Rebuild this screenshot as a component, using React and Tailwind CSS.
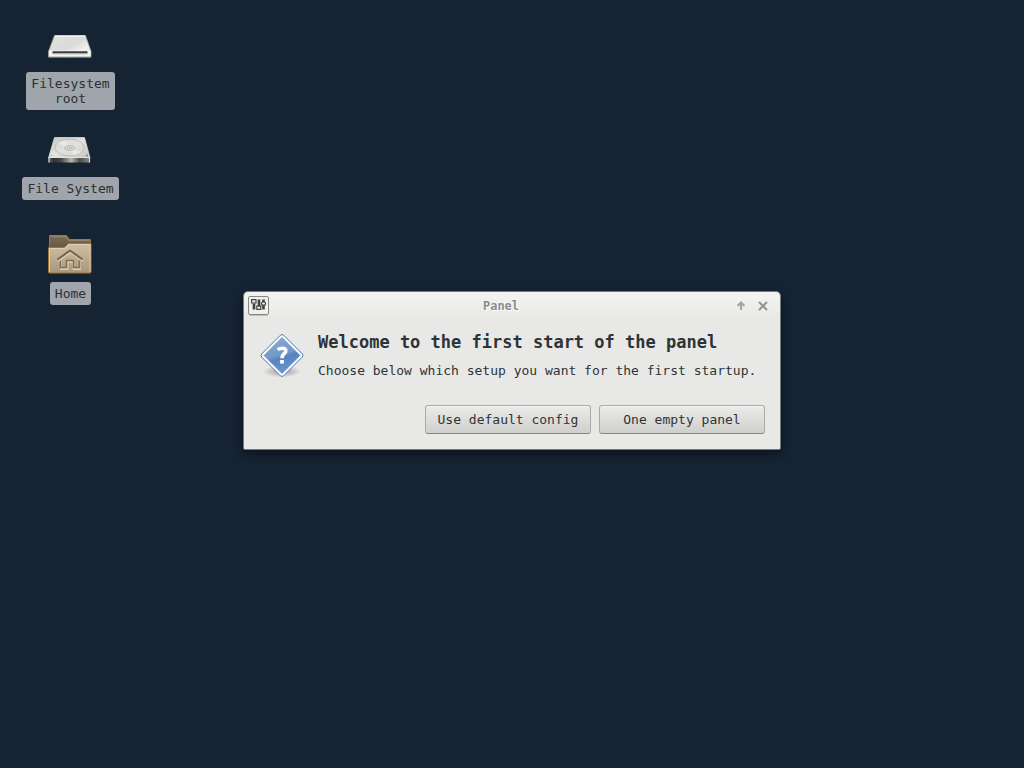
import React from "react";

function RemovableDrive() {
  return (
    <svg viewBox="1 -2 48 48" className="size-12" aria-hidden="true">
      <defs>
        <linearGradient id="rd-top" x1="0" y1="0" x2="1" y2="1">
          <stop offset="0" stopColor="#e2e2e0" />
          <stop offset="0.5" stopColor="#dadad9" />
          <stop offset="0.75" stopColor="#f1f1f0" />
          <stop offset="1" stopColor="#cfcfcd" />
        </linearGradient>
      </defs>
      <path d="M8.500 13.500h31l5.500 16v5.500H2.500v-5.500z" fill="url(#rd-top)" stroke="#a5a5a3" strokeWidth="0.8" />
      <path d="M9 14h30" stroke="#fff" />
      <path d="M3 28.500h41.500v6H3z" fill="#f3f3f2" />
      <path d="M6.500 29.300h35v2.200h-35z" fill="#3b3e3c" />
      <path d="M8 32h32" stroke="#c5c5c3" />
      <path d="M2.500 35.200h42.500" stroke="#8e8e8a" strokeWidth="0.8" />
    </svg>
  );
}

function HardDisk() {
  return (
    <svg viewBox="1 -2 48 48" className="size-12" aria-hidden="true">
      <defs>
        <linearGradient id="hd-top" x1="0" y1="0" x2="1" y2="1">
          <stop offset="0" stopColor="#c4c6c3" />
          <stop offset="0.5" stopColor="#e3e4e2" />
          <stop offset="1" stopColor="#c2c4c1" />
        </linearGradient>
        <linearGradient id="hd-front">
          <stop offset="0" stopColor="#6a6d69" />
          <stop offset="0.12" stopColor="#30332f" />
          <stop offset="0.3" stopColor="#454844" />
          <stop offset="0.55" stopColor="#b7b9b5" />
          <stop offset="0.75" stopColor="#4b4e4a" />
          <stop offset="1" stopColor="#8f918d" />
        </linearGradient>
      </defs>
      <path d="M8.500 10.500h30l5.500 20.500H2.500z" fill="url(#hd-top)" stroke="#d9dad8" strokeWidth="0.8" />
      <ellipse cx="23.500" cy="20.500" rx="14.500" ry="8.500" fill="#dddedc" fillOpacity="0.6" stroke="#b6b8b5" strokeWidth="0.8" />
      <path d="M23.500 21 11 16.500q4-3 9-3.300zM23.500 21l12.500 4q-3 3-8.500 3.700z" fill="#fff" fillOpacity="0.3" />
      <ellipse cx="23.500" cy="21" rx="5" ry="2.300" fill="#d6d7d5" stroke="#aeb0ad" strokeWidth="0.8" />
      <path d="M21 21h5" stroke="#9fa19e" strokeDasharray="1" />
      <circle cx="41" cy="28.500" r="0.900" fill="#777976" />
      <circle cx="5.500" cy="28.500" r="0.700" fill="#a4a6a3" />
      <path d="M2.500 31h41.500v4.500H2.500z" fill="url(#hd-front)" />
      <path d="M2.500 30.500H44M3 31v4.500M43.600 31v4.500" stroke="#e1e2e0" />
    </svg>
  );
}

function HomeFolder() {
  return (
    <svg viewBox="1 0 48 48" className="size-12" aria-hidden="true">
      <defs>
        <linearGradient id="hf-back" x1="0" y1="0" x2="0" y2="1">
          <stop offset="0" stopColor="#7d6d58" />
          <stop offset="1" stopColor="#665641" />
        </linearGradient>
        <linearGradient id="hf-front" x1="0" y1="0" x2="0" y2="1">
          <stop offset="0" stopColor="#cfc0a4" />
          <stop offset="1" stopColor="#a8977a" />
        </linearGradient>
      </defs>
      <path d="M3.500 18V5.500h17l3 4h21V18z" fill="url(#hf-back)" stroke="#a5752f" />
      <path d="M4.500 6.700h15.500l3 4h20.500" fill="none" stroke="#9b8a71" />
      <path d="M2.500 17.500h15q1.500 0 2.500-1.500l1-1.500q1-1 2.500-1h21.500v28.500q0 1-1 1H3.500q-1 0-1-1z" fill="url(#hf-front)" stroke="#a5752f" />
      <path d="M3.500 42V18.500h14.500q1.500 0 2.500-1.500l1-1.500q1-1 2-1h20.500V42" fill="none" stroke="#e3d6be" strokeOpacity="0.8" />
      <g fill="none" strokeLinejoin="round">
        <path d="m12 31 12.500-8.500 12.500 8.500M15 30.500v8.500h6.500v-7h6v7h6.500v-8.500" stroke="#d9cbb0" strokeWidth="2" />
        <path d="m11.500 29.500 12.500-9 12.500 9" stroke="#75644a" strokeWidth="2" />
        <path d="M14.500 30.500v7h6v-7h7v7h6v-7" stroke="#7f6e53" strokeWidth="1.500" />
      </g>
    </svg>
  );
}

function QuestionIcon() {
  return (
    <svg viewBox="0 0 48 48" className="size-12 shrink-0" role="img" aria-label="Question">
      <defs>
        <linearGradient id="q-fill" x1="0.200" y1="0" x2="0.500" y2="1">
          <stop offset="0" stopColor="#8aaad2" />
          <stop offset="0.500" stopColor="#7399ca" />
          <stop offset="0.600" stopColor="#5784be" />
          <stop offset="1" stopColor="#6796d0" />
        </linearGradient>
        <radialGradient id="q-shadow">
          <stop offset="0" stopColor="#000" stopOpacity="0.35" />
          <stop offset="1" stopColor="#000" stopOpacity="0" />
        </radialGradient>
      </defs>
      <ellipse cx="24" cy="40.500" rx="19" ry="6" fill="url(#q-shadow)" />
      <g transform="translate(0 0.500)">
        <path d="M22.300 3.800q1.700-1.500 3.400 0l18.500 18.500q1.500 1.700 0 3.400L25.700 44.200q-1.700 1.500-3.400 0L3.800 25.700q-1.500-1.700 0-3.400z" fill="#fff" stroke="#4374b3" />
        <path d="M24 6 42 24 24 42 6 24z" fill="url(#q-fill)" stroke="#4f7fbc" strokeWidth="0.600" strokeLinejoin="round" />
        <path d="M19.500 18q2.500-1.300 4.900-1.300 3.400 0 3.400 2.700 0 1.500-1.700 2.800-2.100 1.600-2.100 4.500" fill="none" stroke="#fff" strokeWidth="3.600" />
        <path d="M22.100 28.500h3.800v3.600h-3.800z" fill="#fff" />
      </g>
    </svg>
  );
}

function PanelIcon() {
  return (
    <svg viewBox="0 0 22 20" className="h-5 w-[22px] shrink-0" aria-hidden="true">
      <rect x="0.500" y="0.500" width="20" height="18" rx="1.500" fill="#f0f0ef" stroke="#858784" />
      <path d="M1.500 19.500h18" stroke="#bcbdbb" />
      <path d="M6 7.500v6M11 3.500v6.500M15.500 3.500v10" fill="none" stroke="#3c3f3c" strokeWidth="2.600" />
      <g fill="#eeeeed" stroke="#424542" strokeWidth="1.200">
        <path d="M3.600 3.600h4.400v3.400H3.600z" />
        <path d="M8.800 10.200h4v3.200H8.800z" />
        <rect x="13.500" y="6" width="4" height="3.200" rx="1.300" />
      </g>
    </svg>
  );
}

const items = [
  { name: "Filesystem root", Icon: RemovableDrive },
  { name: "File\u00a0System", Icon: HardDisk },
  { name: "Home", Icon: HomeFolder },
];

function DesktopItem({ name, Icon }) {
  return (
    <li className="flex h-[105px] flex-col items-center gap-1">
      <Icon />
      <span className="w-min rounded-[3px] bg-[#a0a4ab] px-[5px] py-1 text-center text-[13px] leading-[15px] text-[#2a3035]">
        {name}
      </span>
    </li>
  );
}

const buttonStyle =
  "h-[29px] rounded-[3px] border border-[#aaaba9] border-b-[#888987] bg-linear-to-b from-[#ebebea] to-[#cfcfce] text-[13px] leading-4 text-[#2e3436] shadow-[inset_0_1px_0_#f7f7f6]";

function WelcomeDialog() {
  return (
    <section
      role="dialog"
      aria-labelledby="dialog-title"
      className="w-[538px] max-w-full rounded-t-[5px] rounded-b-[2px] border border-[#767a7c] bg-[#e8e8e6] bg-[linear-gradient(#f4f4f3,#e8e8e6_26px)] shadow-[0_4px_10px_rgba(0,0,0,0.45)]"
    >
      <header className="flex h-7 items-center pr-3 pl-1">
        <PanelIcon />
        <h1 id="dialog-title" className="flex-1 pr-1 text-center text-[12px] leading-4 font-bold text-[#8b8d8b] [text-shadow:1px_1px_0_#fff]">
          Panel
        </h1>
        <div className="flex gap-3">
          <button type="button" aria-label="Shade" className="size-[10px] text-[#a2a4a2]">
            <svg viewBox="0 0 10 10" className="size-full" fill="none" stroke="currentColor" strokeWidth="2">
              <path d="M5 9V2M1.500 5 5 1.500 8.500 5" />
            </svg>
          </button>
          <button type="button" aria-label="Close" className="size-[10px] text-[#929492]">
            <svg viewBox="0 0 10 10" className="size-full" fill="none" stroke="currentColor" strokeWidth="2">
              <path d="m1 1 8 8M9 1 1 9" />
            </svg>
          </button>
        </div>
      </header>
      <div className="flex gap-3 px-[14px] pt-[11px] text-[#2e3436]">
        <QuestionIcon />
        <div className="flex flex-col gap-[10px]">
          <h2 className="text-[17px] leading-[22px] font-bold">Welcome to the first start of the panel</h2>
          <p className="text-[13px] leading-4">Choose below which setup you want for the first startup.</p>
        </div>
      </div>
      <footer className="flex justify-end gap-2 pt-[26px] pr-[15px] pb-[15px]">
        <button type="button" className={`w-[166px] ${buttonStyle}`}>Use default config</button>
        <button type="button" className={`w-[166px] ${buttonStyle}`}>One empty panel</button>
      </footer>
    </section>
  );
}

export default function App() {
  return (
    <main className="flex min-h-screen flex-col bg-[#162333] font-['DejaVu_Sans_Mono',monospace]">
      <ul className="flex w-[141px] flex-col pt-5">
        {items.map((item) => (
          <DesktopItem key={item.name} {...item} />
        ))}
      </ul>
      <div className="absolute inset-x-0 top-[291px] flex justify-center">
        <WelcomeDialog />
      </div>
    </main>
  );
}
